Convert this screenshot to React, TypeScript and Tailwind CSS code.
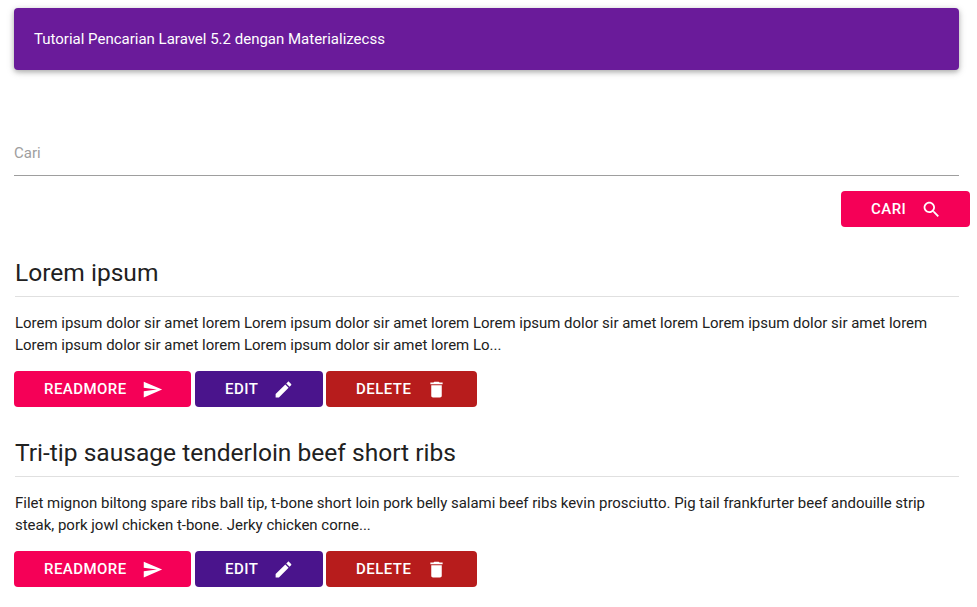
import React from "react";

const Send = () => (
  <svg className="shrink-0" width="21" height="21" viewBox="0 0 24 24" fill="currentColor"><path d="M2.01 21L23 12 2.01 3 2 10l15 2-15 2z" /></svg>
);
const Edit = () => (
  <svg className="shrink-0" width="21" height="21" viewBox="0 0 24 24" fill="currentColor"><path d="M3 17.25V21h3.75L17.81 9.94l-3.75-3.75L3 17.25zM20.71 7.04c.39-.39.39-1.02 0-1.41l-2.34-2.34c-.39-.39-1.02-.39-1.41 0l-1.83 1.83 3.75 3.75 1.83-1.83z" /></svg>
);
const Trash = () => (
  <svg className="shrink-0" width="21" height="21" viewBox="0 0 24 24" fill="currentColor"><path d="M6 19c0 1.1.9 2 2 2h8c1.1 0 2-.9 2-2V7H6v12zM19 4h-3.5l-1-1h-5l-1 1H5v2h14V4z" /></svg>
);
const Search = () => (
  <svg className="shrink-0" width="21" height="21" viewBox="0 0 24 24" fill="currentColor"><path d="M15.5 14h-.79l-.28-.27C15.41 12.59 16 11.11 16 9.5 16 5.91 13.09 3 9.5 3S3 5.91 3 9.5 5.91 16 9.5 16c1.61 0 3.09-.59 4.23-1.57l.27.28v.79l5 4.99L20.49 19l-4.99-5zm-6 0C7.01 14 5 11.99 5 9.5S7.01 5 9.5 5 14 7.01 14 9.5 11.99 14 9.5 14z" /></svg>
);

function Btn({ label, icon, cls }: { label: string; icon: React.ReactNode; cls: string }) {
  return (
    <button className={`h-9 flex items-center justify-start gap-[15px] rounded-sm pl-[30px] text-[15px] font-medium uppercase tracking-[0.45px] text-white ${cls}`}>
      <span>{label}</span>
      {icon}
    </button>
  );
}

function Post({ title, body }: { title: string; body: string }) {
  return (
    <div className="pl-[1px]">
      <h2 className="text-[24.55px] leading-[36px] text-[#212121] border-b border-[#e0e0e0] pb-[5px]">{title}</h2>
      <p className="mt-[15px] text-[14.98px] leading-[22px] text-[#212121] w-[930px]">{body}</p>
      <div className="mt-[15px] flex -ml-[1px]">
        <Btn label="Readmore" icon={<Send />} cls="bg-[#f50057] w-[177px]" />
        <Btn label="Edit" icon={<Edit />} cls="bg-[#4a148c] w-[128px] ml-1" />
        <Btn label="Delete" icon={<Trash />} cls="bg-[#b71c1c] w-[151px] ml-[3px]" />
      </div>
    </div>
  );
}

export default function App() {
  return (
    <div className="h-[607px] w-[977px] overflow-hidden bg-white pt-2 pl-[14px] pr-[7px] font-['Roboto',sans-serif]">
      <div className="mr-[11px] h-[62px] flex items-center rounded-sm bg-[#6a1b9a] pl-5 pt-px text-[15px] text-white shadow-[0_2px_5px_rgba(0,0,0,0.26),0_2px_10px_rgba(0,0,0,0.12)]">
        Tutorial Pencarian Laravel 5.2 dengan Materializecss
      </div>
      <div className="mt-[61px] mr-[11px] h-[45px] border-b border-[#9e9e9e] flex items-center text-[15px] text-[#9e9e9e]">Cari</div>
      <div className="mt-[15px] flex justify-end">
        <Btn label="Cari" icon={<Search />} cls="bg-[#f50057] w-[129px]" />
      </div>
      <div className="mt-[28px] mr-[11px] flex flex-col gap-[28px]">
        <Post title="Lorem ipsum" body="Lorem ipsum dolor sir amet lorem Lorem ipsum dolor sir amet lorem Lorem ipsum dolor sir amet lorem Lorem ipsum dolor sir amet lorem Lorem ipsum dolor sir amet lorem Lorem ipsum dolor sir amet lorem Lo..." />
        <Post title="Tri-tip sausage tenderloin beef short ribs" body="Filet mignon biltong spare ribs ball tip, t-bone short loin pork belly salami beef ribs kevin prosciutto. Pig tail frankfurter beef andouille strip steak, pork jowl chicken t-bone. Jerky chicken corne..." />
      </div>
    </div>
  );
}
